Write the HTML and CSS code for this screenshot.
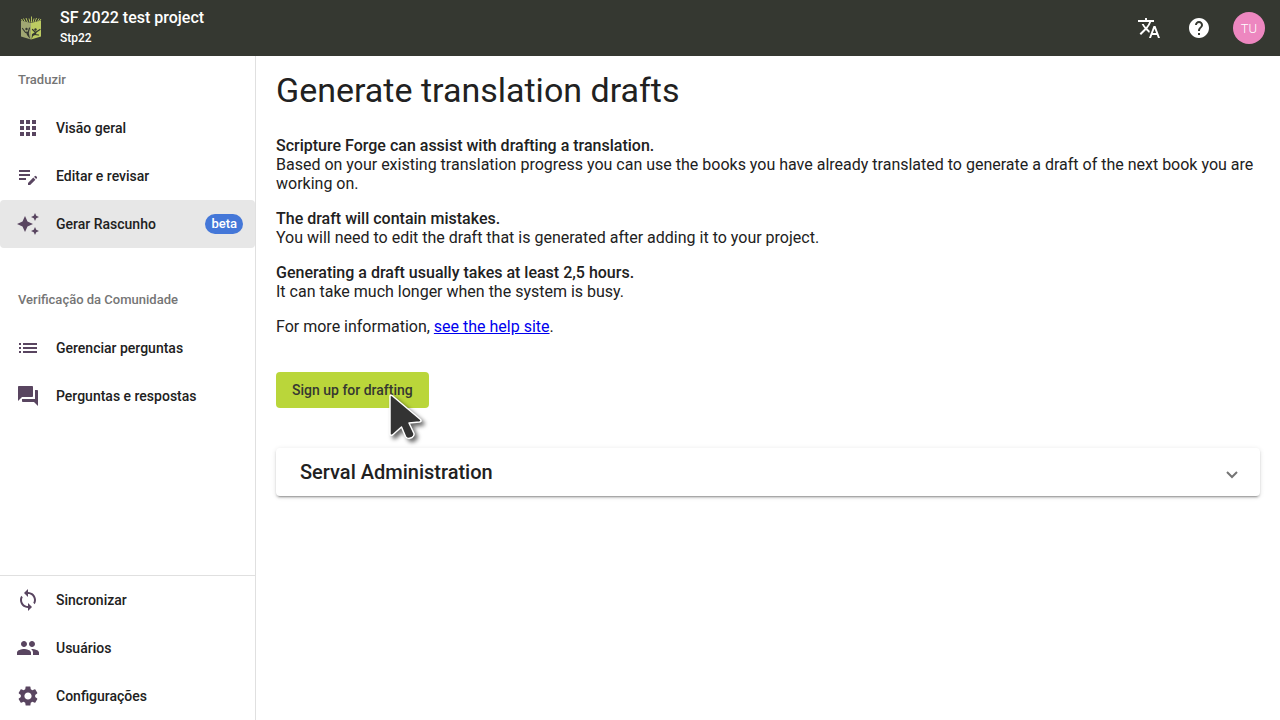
FILE: index.html
```html
<!DOCTYPE html>
<html lang="pt-BR">
<head>
<meta charset="utf-8">
<meta name="viewport" content="width=device-width, initial-scale=1">
<title>SF 2022 test project</title>
<link rel="stylesheet" href="styles.css">
</head>
<body>
<header class="topbar">
  <a class="logo" href="#" aria-label="Scripture Forge">
    <svg width="22" height="24" viewBox="0 0 22 24" aria-hidden="true">
      <path fill="#a0a672" d="M1 4.500 11 7v16.500L1 20.500z"/>
      <path fill="#bccb62" d="M11 7 21 4.500v16L11 23.500z"/>
      <path fill="none" stroke="#b4c05f" stroke-width="1" d="M2.500 5 1.500 3M5 5.500 3.500 2.500M7.500 6 6 2M10 6.500 9 2.500M11.500 6.500V.5M13 6.500l1-4M15 6 16.500 2M17.500 5.500l1.500-3M19.500 5 21 3"/>
      <g fill="none" stroke="#353831" stroke-linecap="round" stroke-linejoin="round">
        <path stroke-width="1.200" d="M2.500 12.500l3 4 2.500.5 1.500-5M15.500 16.500l-3-3M15.500 16.500l4.500-3M14.500 18.500l4 .5"/>
      </g>
      <path fill="#353831" d="M6 15.500l2.500.5 1.500 6.500.5 1L7 19zM16.500 15.500l-.5 3-3 1.500-1.500 3.500.5-5.500z"/>
      <circle cx="6.500" cy="13" r="1.200" fill="#353831"/>
      <circle cx="15.500" cy="13.500" r="1.200" fill="#353831"/>
    </svg>
  </a>
  <div class="project">
    <div class="project-name">SF 2022 test project</div>
    <div class="project-code">Stp22</div>
  </div>
  <div class="actions">
    <button class="icon-button" type="button" aria-label="Language">
      <svg class="icon" viewBox="0 0 24 24"><path d="m12.870 15.070-2.540-2.510.03-.03A17.520 17.520 0 0 0 14.070 6H17V4h-7V2H8v2H1v1.990h11.170C11.500 7.920 10.440 9.750 9 11.350 8.070 10.320 7.300 9.190 6.690 8h-2c.73 1.630 1.730 3.170 2.980 4.560l-5.090 5.020L4 19l5-5 3.110 3.110.76-2.040zM18.500 10h-2L12 22h2l1.120-3h4.750L21 22h2l-4.500-12zm-2.620 7 1.620-4.330L19.120 17h-3.240z"/></svg>
    </button>
    <button class="icon-button" type="button" aria-label="Help">
      <svg class="icon" viewBox="0 0 24 24"><path d="M12 2C6.480 2 2 6.480 2 12s4.480 10 10 10 10-4.480 10-10S17.520 2 12 2zm1 17h-2v-2h2v2zm2.070-7.750-.9.920C13.450 12.900 13 13.500 13 15h-2v-.5c0-1.100.45-2.100 1.170-2.830l1.240-1.260c.37-.36.59-.86.59-1.410 0-1.100-.9-2-2-2s-2 .9-2 2H8c0-2.210 1.790-4 4-4s4 1.790 4 4c0 .88-.36 1.680-.93 2.250z"/></svg>
    </button>
    <button class="avatar" type="button">TU</button>
  </div>
</header>
<div class="layout">
  <nav class="sidebar">
    <div class="group">
      <h2 class="group-title">Traduzir</h2>
      <a class="nav-item" href="#"><svg class="icon" viewBox="0 0 24 24"><path d="M4 8h4V4H4v4zm6 12h4v-4h-4v4zm-6 0h4v-4H4v4zm0-6h4v-4H4v4zm6 0h4v-4h-4v4zm6-10v4h4V4h-4zm-6 4h4V4h-4v4zm6 6h4v-4h-4v4zm0 6h4v-4h-4v4z"/></svg>Visão geral</a>
      <a class="nav-item" href="#"><svg class="icon" viewBox="0 0 24 24"><path d="M3 10h11v2H3v-2zm0-2h11V6H3v2zm0 8h7v-2H3v2zm15.010-3.130.71-.71a.996.996 0 0 1 1.410 0l.71.71c.39.39.39 1.020 0 1.410l-.71.71-2.120-2.120zm-.71.710-5.300 5.300V21h2.120l5.300-5.300-2.120-2.120z"/></svg>Editar e revisar</a>
      <a class="nav-item selected" href="#" aria-current="page"><svg class="icon" viewBox="0 0 24 24"><path d="m19 9 1.250-2.750L23 5l-2.750-1.250L19 1l-1.250 2.750L15 5l2.750 1.250L19 9zm-7.500.5L9 4 6.500 9.500 1 12l5.500 2.500L9 20l2.500-5.500L17 12l-5.500-2.500zM19 15l-1.250 2.750L15 19l2.750 1.250L19 23l1.250-2.750L23 19l-2.750-1.250L19 15z"/></svg>Gerar Rascunho<span class="badge">beta</span></a>
    </div>
    <div class="group">
      <h2 class="group-title">Verificação da Comunidade</h2>
      <a class="nav-item" href="#"><svg class="icon" viewBox="0 0 24 24"><path d="M3 13h2v-2H3v2zm0 4h2v-2H3v2zm0-8h2V7H3v2zm4 4h14v-2H7v2zm0 4h14v-2H7v2zM7 7v2h14V7H7z"/></svg>Gerenciar perguntas</a>
      <a class="nav-item" href="#"><svg class="icon" viewBox="0 0 24 24"><path d="M21 6h-2v9H6v2c0 .55.45 1 1 1h11l4 4V7c0-.55-.45-1-1-1zm-4 6V3c0-.55-.45-1-1-1H3c-.55 0-1 .45-1 1v14l4-4h10c.55 0 1-.45 1-1z"/></svg>Perguntas e respostas</a>
    </div>
    <div class="group admin">
      <a class="nav-item" href="#"><svg class="icon" viewBox="0 0 24 24"><path d="M12 4V1L8 5l4 4V6c3.310 0 6 2.690 6 6 0 1.010-.25 1.970-.7 2.800l1.460 1.460A7.930 7.930 0 0 0 20 12c0-4.420-3.580-8-8-8zm0 14c-3.310 0-6-2.690-6-6 0-1.010.25-1.970.7-2.800L5.240 7.740A7.930 7.930 0 0 0 4 12c0 4.420 3.580 8 8 8v3l4-4-4-4v3z"/></svg>Sincronizar</a>
      <a class="nav-item" href="#"><svg class="icon" viewBox="0 0 24 24"><path d="M16 11c1.660 0 2.990-1.340 2.990-3S17.660 5 16 5s-3 1.340-3 3 1.340 3 3 3zm-8 0c1.660 0 2.990-1.340 2.990-3S9.660 5 8 5 5 6.340 5 8s1.340 3 3 3zm0 2c-2.330 0-7 1.170-7 3.500V19h14v-2.500c0-2.330-4.670-3.500-7-3.500zm8 0c-.29 0-.62.02-.97.05 1.160.84 1.970 1.970 1.970 3.450V19h6v-2.500c0-2.330-4.670-3.500-7-3.500z"/></svg>Usuários</a>
      <a class="nav-item" href="#"><svg class="icon" viewBox="0 0 24 24"><path d="M19.140 12.940c.04-.3.060-.61.060-.94 0-.32-.02-.64-.07-.94l2.030-1.580a.49.490 0 0 0 .12-.61l-1.920-3.320a.488.488 0 0 0-.59-.22l-2.390.96c-.5-.38-1.030-.7-1.620-.94l-.36-2.540a.484.484 0 0 0-.48-.41h-3.840c-.24 0-.43.17-.47.41l-.36 2.540c-.59.24-1.130.57-1.620.94l-2.390-.96c-.22-.08-.47 0-.59.22L2.740 8.870c-.12.21-.08.47.12.61l2.030 1.580c-.05.3-.09.63-.09.94s.02.64.07.94l-2.030 1.580a.49.490 0 0 0-.12.61l1.920 3.320c.12.22.37.29.59.22l2.390-.96c.5.38 1.030.7 1.620.94l.36 2.540c.05.24.24.41.48.41h3.840c.24 0 .44-.17.47-.41l.36-2.540c.59-.24 1.130-.56 1.620-.94l2.390.96c.22.08.47 0 .59-.22l1.920-3.320c.12-.22.07-.47-.12-.61l-2.010-1.580zM12 15.600c-1.980 0-3.600-1.620-3.600-3.600s1.620-3.600 3.600-3.600 3.600 1.620 3.600 3.600-1.620 3.600-3.600 3.600z"/></svg>Configurações</a>
    </div>
  </nav>
  <main class="content">
    <h1 class="title">Generate translation drafts</h1>
    <p class="text"><strong>Scripture Forge can assist with drafting a translation.</strong><br>Based on your existing translation progress you can use the books you have already translated to generate a draft of the next book you are working on.</p>
    <p class="text"><strong>The draft will contain mistakes.</strong><br>You will need to edit the draft that is generated after adding it to your project.</p>
    <p class="text"><strong>Generating a draft usually takes at least 2,5 hours.</strong><br>It can take much longer when the system is busy.</p>
    <p class="text">For more information, <a class="link" href="#">see the help site</a>.</p>
    <div class="signup">
      <button class="primary" type="button">Sign up for drafting</button>
      <svg class="pointer" width="44" height="54" viewBox="0 0 44 54" aria-hidden="true">
        <path d="M5 6.500Q5 4.500 7 5.500L35.500 29.500Q37 31.500 34.500 32L24 33l5 10.500Q29.500 46 27 47.500L24 48.500Q21.500 48.500 20.500 46.500L16.500 37 7.500 45Q5 46 5 43.500z" fill="#333" stroke="#fff" stroke-width="1.500" stroke-linejoin="round"/>
      </svg>
    </div>
    <button class="panel" type="button" aria-expanded="false">
      <span>Serval Administration</span>
      <svg width="14" height="16" viewBox="0 0 14 16" aria-hidden="true"><path d="M2 8l5 5 5-5" fill="none" stroke="#757575" stroke-width="2"/></svg>
    </button>
  </main>
</div>
</body>
</html>
```
FILE: styles.css
```css
* {
  box-sizing: border-box;
}

body {
  margin: 0;
  min-height: 100vh;
  display: flex;
  flex-direction: column;
  font: 16px/19px Roboto, sans-serif;
  color: #212121;
  background: #fff;
}

button {
  font-family: inherit;
  border: 0;
  cursor: pointer;
}

.icon {
  width: 24px;
  height: 24px;
  flex: none;
  fill: currentColor;
}

.topbar {
  display: flex;
  align-items: center;
  height: 56px;
  padding: 0 15px 0 20px;
  background: #353831;
  color: #fff;
}

.logo {
  display: flex;
  width: 40px;
}

.project {
  font-weight: 500;
}

.project-name {
  line-height: 20px;
}

.project-code {
  font-size: 12px;
  line-height: 20px;
}

.actions {
  display: flex;
  align-items: center;
  gap: 2px;
  margin-left: auto;
}

.icon-button {
  display: flex;
  padding: 12px;
  background: none;
  color: inherit;
}

.avatar {
  width: 32px;
  height: 32px;
  margin-left: 8px;
  padding: 0;
  border-radius: 50%;
  background: #ed87c0;
  color: #fff;
  font-size: 13px;
  font-weight: 300;
}

.layout {
  display: flex;
  flex: 1;
}

.sidebar {
  display: flex;
  flex-direction: column;
  gap: 28px;
  flex: none;
  width: 256px;
  border-right: 1px solid #e0e0e0;
}

.group-title {
  margin: 0;
  padding: 0 18px;
  font-size: 13px;
  font-weight: 500;
  line-height: 48px;
  color: #757575;
}

.nav-item {
  display: flex;
  align-items: center;
  height: 48px;
  padding: 0 12px 0 16px;
  border-radius: 4px;
  font-size: 14px;
  font-weight: 500;
  color: #212121;
  text-decoration: none;
}

.nav-item .icon {
  margin-right: 16px;
  fill: #594560;
}

.selected {
  background: #e7e7e7;
}

.badge {
  margin-left: auto;
  padding: 0 6px;
  border-radius: 10px;
  background: #4477d8;
  color: #fff;
  font-size: 13px;
  line-height: 20px;
}

.admin {
  margin-top: auto;
  border-top: 1px solid #e0e0e0;
}

.content {
  flex: 1;
  min-width: 0;
  padding: 14px 20px;
}

.title {
  margin: 0 0 26px;
  font-size: 34px;
  font-weight: 400;
  line-height: 40px;
}

.text {
  margin: 0 0 16px;
}

.text strong {
  font-weight: 500;
}

.link {
  color: #0000ee;
}

.signup {
  position: relative;
  display: flex;
  margin: 36px 0 40px;
}

.primary {
  height: 36px;
  padding: 0 16px;
  border-radius: 4px;
  background: #bad63a;
  color: #353831;
  font-size: 14px;
  font-weight: 500;
}

.pointer {
  position: absolute;
  top: 18px;
  left: 109px;
  overflow: visible;
  filter: drop-shadow(3px 3px 2px rgba(0, 0, 0, 0.6));
  pointer-events: none;
}

.panel {
  display: flex;
  align-items: center;
  justify-content: space-between;
  width: 100%;
  height: 48px;
  padding: 0 21px 0 24px;
  border-radius: 4px;
  background: #fff;
  color: #212121;
  font-size: 20px;
  font-weight: 500;
  box-shadow: 0 3px 1px -2px rgba(0, 0, 0, 0.2), 0 2px 2px 0 rgba(0, 0, 0, 0.14), 0 1px 5px 0 rgba(0, 0, 0, 0.12);
}
```
